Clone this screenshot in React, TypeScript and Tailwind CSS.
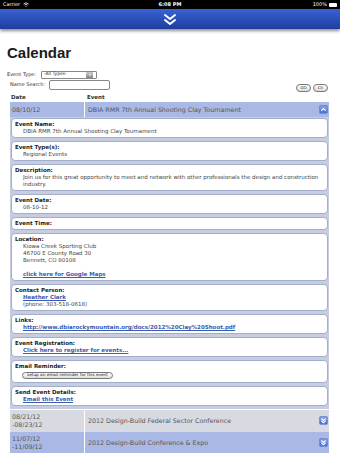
import type { ReactNode } from 'react'

const font = { fontFamily: '"DejaVu Sans", Verdana, sans-serif' }

function Chevrons({ up = false }: { up?: boolean }) {
  return (
    <svg width="9" height="9" viewBox="0 0 10 10" className="shrink-0">
      <rect x="0.5" y="0.5" width="9" height="9" rx="1.5" fill="#5574cf" stroke="#6d83c2" strokeWidth="0.6" />
      <rect x="1" y="1" width="8" height="4" rx="1" fill="#8fa6e6" opacity="0.7" />
      {up ? (
        <path d="M2.5 6.5 L5 4 L7.5 6.5" fill="none" stroke="#fff" strokeWidth="1.4" />
      ) : (
        <g fill="none" stroke="#fff" strokeWidth="1.2">
          <path d="M2.6 2.8 L5 5 L7.4 2.8" />
          <path d="M2.6 5.3 L5 7.5 L7.4 5.3" />
        </g>
      )}
    </svg>
  )
}

function Box({ label, children }: { label: string; children?: ReactNode }) {
  return (
    <div className="bg-white rounded-[4px] border border-[#a3aecb] px-[3px] py-[2px]">
      <div className="font-bold text-[#222] leading-[7px]">{label}</div>
      {children && <div className="pl-[8px] text-[#444] leading-[7px]">{children}</div>}
    </div>
  )
}

function A({ children }: { children: ReactNode }) {
  return <span className="text-[#3a5bb0] font-bold underline">{children}</span>
}

export default function App() {
  return (
    <div className="w-[340px] h-[453px] overflow-hidden bg-white" style={font}>
      {/* status bar */}
      <div className="h-[9px] bg-black text-white text-[5px] leading-[9px] flex items-center justify-between px-[3px]">
        <div className="flex items-center gap-[3px] w-[60px]">
          <span>Carrier</span>
          <svg width="6" height="5" viewBox="0 0 12 10">
            <path d="M1 4 Q6 -1 11 4" fill="none" stroke="#fff" strokeWidth="1.5" />
            <path d="M3 6 Q6 3 9 6" fill="none" stroke="#fff" strokeWidth="1.5" />
            <circle cx="6" cy="8.5" r="1.2" fill="#fff" />
          </svg>
        </div>
        <span className="font-bold">6:08 PM</span>
        <div className="flex items-center justify-end gap-[2px] w-[60px]">
          <span>100%</span>
          <div className="w-[8px] h-[4px] bg-white rounded-[1px]" />
        </div>
      </div>

      {/* nav bar */}
      <div className="h-[20px] bg-gradient-to-b from-[#3a62d6] to-[#1e3e9e] shadow-[0_2px_3px_rgba(0,0,0,0.45)] flex items-center justify-center relative z-10">
        <svg width="14" height="13" viewBox="0 0 14 13">
          <g fill="none" stroke="#fff" strokeWidth="2" strokeLinecap="round" strokeLinejoin="round">
            <path d="M2 2 L7 6 L12 2" />
            <path d="M2 7 L7 11 L12 7" />
          </g>
        </svg>
      </div>

      <div className="px-[7px]">
        <h1
          className="mt-[15px] text-[15px] leading-[17px] font-bold text-[#1a1a1a]"
          style={{ fontFamily: '"Liberation Sans", Arial, sans-serif' }}
        >
          Calendar
        </h1>

        {/* search form */}
        <div className="mt-[9px] text-[5px] text-[#333]">
          <div className="flex items-center h-[9px]">
            <span className="w-[34px]">Event Type:</span>
            <div className="w-[56px] h-[8px] border border-[#888] rounded-[1px] flex items-center justify-between bg-white">
              <span className="pl-[2px] text-[4.5px]">-All Types-</span>
              <div className="w-[7px] h-[6px] bg-gradient-to-b from-[#ccc] to-[#888] mr-[3px] flex items-center justify-center">
                <div className="w-0 h-0 border-l-[1.5px] border-r-[1.5px] border-t-[2px] border-l-transparent border-r-transparent border-t-white" />
              </div>
            </div>
          </div>
          <div className="flex items-center h-[11px] pl-[3px]">
            <span className="w-[39px]">Name Search:</span>
            <div className="w-[61px] h-[10px] border border-[#888] rounded-[2px] bg-white" />
            <div className="flex-1" />
            <div className="flex gap-[2px] mt-[7px] mr-[5px]">
              <span className="w-[15px] h-[8px] rounded-full border border-[#777] bg-gradient-to-b from-white to-[#ddd] text-[4px] flex items-center justify-center">
                GO
              </span>
              <span className="w-[15px] h-[8px] rounded-full border border-[#777] bg-gradient-to-b from-white to-[#ddd] text-[4px] flex items-center justify-center">
                Clr
              </span>
            </div>
          </div>
        </div>

        {/* table */}
        <div className="ml-[3px] mr-[4px] mt-[3px]">
          <div className="flex h-[9px] items-center text-[5.5px] font-bold text-[#333]">
            <div className="w-[75px] pl-[1px]">Date</div>
            <div className="pl-[2px]">Event</div>
          </div>

          <div className="flex h-[15px] bg-[#a9b8e4] text-[6.3px] text-[#555]">
            <div className="w-[75px] border-r border-white pl-[2px] flex items-center">08/10/12</div>
            <div className="flex-1 flex items-center justify-between pl-[3px] pr-[1px]">
              <span>DBIA RMR 7th Annual Shooting Clay Tournament</span>
              <Chevrons up />
            </div>
          </div>

          <div className="bg-[#c6cde0] pt-[1px] pb-[3px] px-[1px] flex flex-col gap-[3px] text-[5.5px]">
            <Box label="Event Name:">DBIA RMR 7th Annual Shooting Clay Tournament</Box>
            <Box label="Event Type(s):">Regional Events</Box>
            <Box label="Description:">
              Join us for this great opportunity to meet and network with other professionals the design and construction industry.
            </Box>
            <Box label="Event Date:">08-10-12</Box>
            <Box label="Event Time:" />
            <Box label="Location:">
              <div>Kiowa Creek Sporting Club</div>
              <div>46700 E County Road 30</div>
              <div>Bennett, CO 80108</div>
              <div className="h-[7px]" />
              <A>click here for Google Maps</A>
            </Box>
            <Box label="Contact Person:">
              <div>
                <A>Heather Clark</A>
              </div>
              <div>(phone: 303-518-0618)</div>
            </Box>
            <Box label="Links:">
              <A>http://www.dbiarockymountain.org/docs/2012%20Clay%20Shoot.pdf</A>
            </Box>
            <Box label="Event Registration:">
              <A>Click here to register for events...</A>
            </Box>
            <Box label="Email Reminder:">
              <div className="pt-[1px] pb-[1px] -ml-[1px] leading-[6px]">
                <span className="inline-flex items-center justify-center w-[91px] h-[7px] rounded-full border border-[#777] bg-gradient-to-b from-white to-[#ddd] text-[4.2px] text-[#222]">
                  setup an email reminder for this event
                </span>
              </div>
            </Box>
            <Box label="Send Event Details:">
              <A>Email this Event</A>
            </Box>
          </div>

          <div className="flex h-[22px] bg-[#d7dae1] text-[6.3px] text-[#555] mt-[1px]">
            <div className="w-[75px] border-r border-white pl-[2px] flex flex-col justify-center leading-[8px]">
              <span>08/21/12</span>
              <span>-08/23/12</span>
            </div>
            <div className="flex-1 flex items-center justify-between pl-[3px] pr-[1px]">
              <span>2012 Design-Build Federal Sector Conference</span>
              <Chevrons />
            </div>
          </div>
          <div className="flex h-[22px] bg-[#a9b8e4] text-[6.3px] text-[#555]">
            <div className="w-[75px] border-r border-white pl-[2px] flex flex-col justify-center leading-[8px]">
              <span>11/07/12</span>
              <span>-11/09/12</span>
            </div>
            <div className="flex-1 flex items-center justify-between pl-[3px] pr-[1px]">
              <span>2012 Design-Build Conference &amp; Expo</span>
              <Chevrons />
            </div>
          </div>
        </div>
      </div>
    </div>
  )
}
